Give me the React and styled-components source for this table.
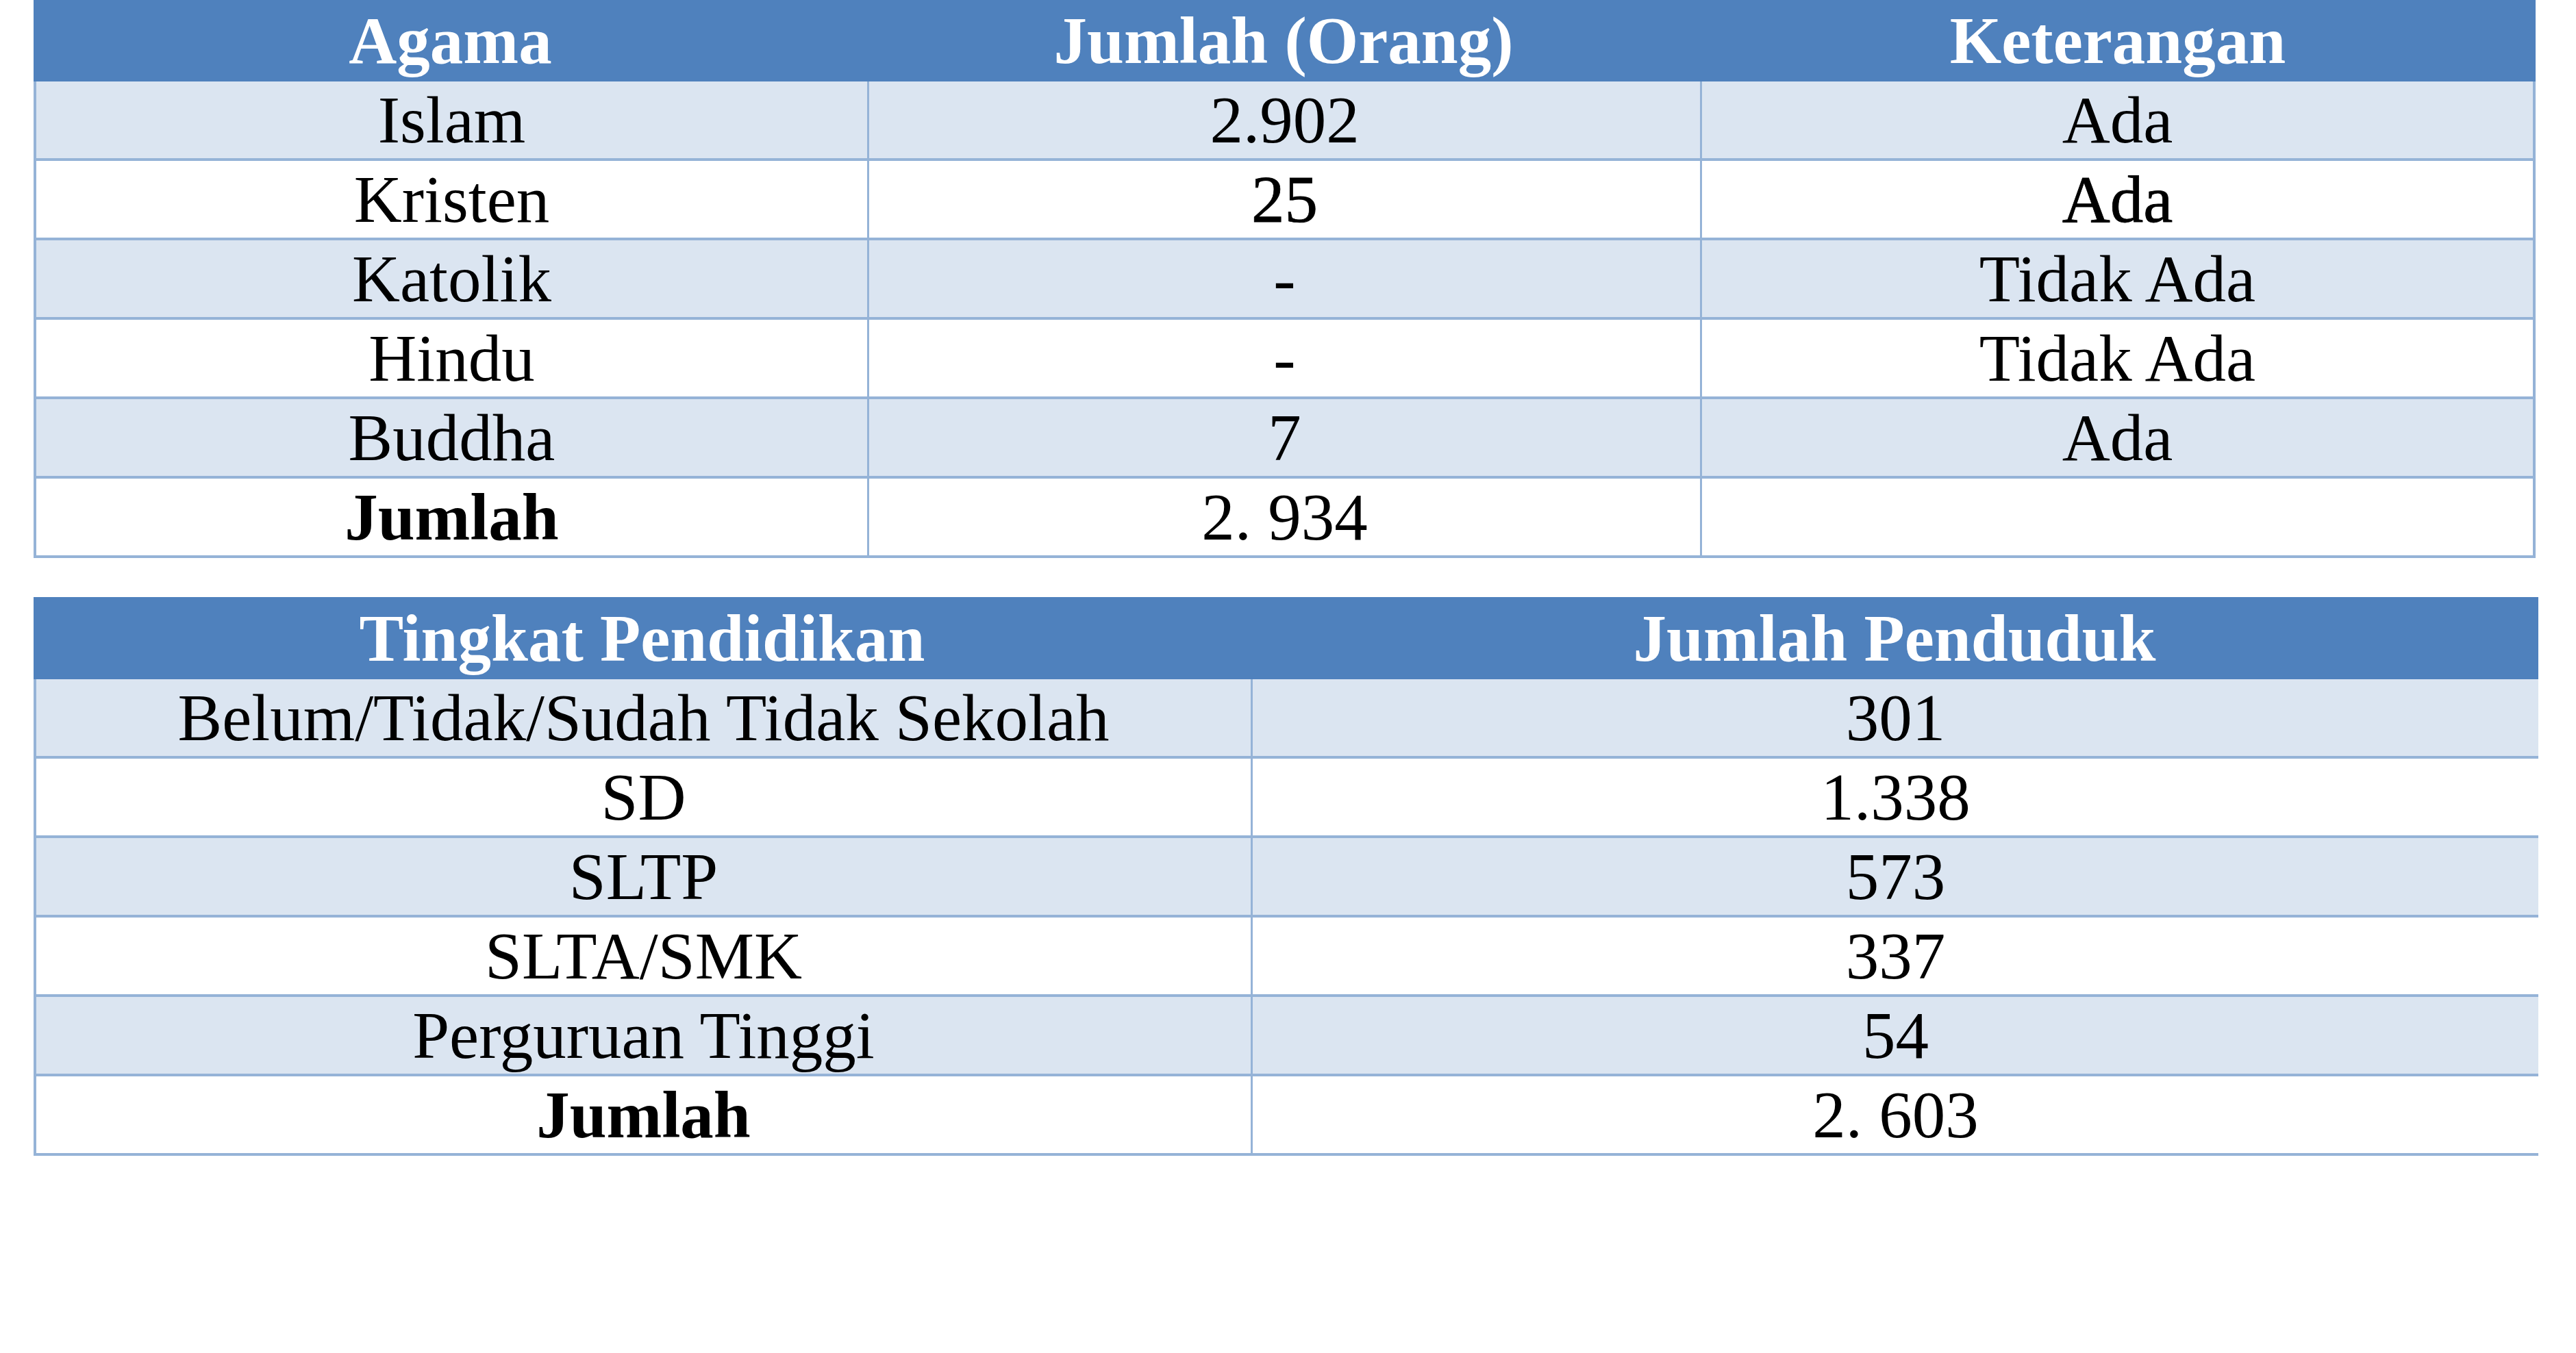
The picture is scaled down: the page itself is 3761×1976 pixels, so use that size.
import React from 'react';
import styled, { createGlobalStyle } from 'styled-components';

const Global = createGlobalStyle`
  html, body { margin: 0; padding: 0; background: #ffffff; }
  body { font-family: "Liberation Serif", "Times New Roman", serif; color: #000; }
`;

const BORDER = '#95B3D7';

const Page = styled.div`
  display: flex;
  flex-direction: column;
  gap: 57px;
  padding-left: 49px;
  box-sizing: border-box;
  width: 3761px;
`;

const Table = styled.div`
  width: ${(p) => p.$width}px;
  display: flex;
  flex-direction: column;
`;

const HeaderRow = styled.div`
  display: grid;
  grid-template-columns: ${(p) => p.$cols};
  height: ${(p) => p.$h}px;
  background: #4f81bd;
`;

const HeaderCell = styled.div`
  color: #ffffff;
  font-weight: 700;
  font-size: 97px;
  padding-top: 1px;
  line-height: ${(p) => p.$h - 1}px;
  text-align: center;
  white-space: nowrap;
`;

const Row = styled.div`
  display: grid;
  grid-template-columns: ${(p) => p.$cols};
  height: 116px;
  box-sizing: border-box;
  background: ${(p) => (p.$shade ? '#DBE5F1' : '#ffffff')};
  border-left: 4px solid ${BORDER};
  border-right: ${(p) => (p.$rightBorder ? `4px solid ${BORDER}` : 'none')};
  border-bottom: 4px solid ${BORDER};
`;

const Cell = styled.div`
  box-sizing: border-box;
  font-size: 97px;
  padding-top: 2px;
  line-height: 110px;
  text-align: center;
  white-space: nowrap;
  font-weight: ${(p) => (p.$bold ? 700 : 400)};
  -webkit-text-stroke: ${(p) => (p.$heavy ? '0.8px #000' : '0')};
  & + & {
    border-left: 3px solid ${BORDER};
  }
`;

const agama = [
  ['Islam', '2.902', 'Ada'],
  ['Kristen', '25', 'Ada', true],
  ['Katolik', '-', 'Tidak Ada'],
  ['Hindu', '-', 'Tidak Ada'],
  ['Buddha', '7', 'Ada'],
];

const pendidikan = [
  ['Belum/Tidak/Sudah Tidak Sekolah', '301'],
  ['SD', '1.338'],
  ['SLTP', '573'],
  ['SLTA/SMK', '337'],
  ['Perguruan Tinggi', '54'],
];

export default function App() {
  return (
    <>
      <Global />
      <Page>
        <Table $width={3653}>
          <HeaderRow $cols="1217px 1216px 1220px" $h={119}>
            <HeaderCell $h={119}>Agama</HeaderCell>
            <HeaderCell $h={119}>Jumlah (Orang)</HeaderCell>
            <HeaderCell $h={119}>Keterangan</HeaderCell>
          </HeaderRow>
          {agama.map(([a, b, c, heavy], i) => (
            <Row key={a} $cols="1213px 1216px 1216px" $shade={i % 2 === 0} $rightBorder>
              <Cell>{a}</Cell>
              <Cell $heavy={heavy}>{b}</Cell>
              <Cell $heavy={heavy}>{c}</Cell>
            </Row>
          ))}
          <Row $cols="1213px 1216px 1216px" $rightBorder>
            <Cell $bold>Jumlah</Cell>
            <Cell>2. 934</Cell>
            <Cell />
          </Row>
        </Table>

        <Table $width={3657}>
          <HeaderRow $cols="1777px 1880px" $h={120}>
            <HeaderCell $h={120}>Tingkat Pendidikan</HeaderCell>
            <HeaderCell $h={120}>Jumlah Penduduk</HeaderCell>
          </HeaderRow>
          {pendidikan.map(([a, b], i) => (
            <Row key={a} $cols="1773px 1880px" $shade={i % 2 === 0}>
              <Cell>{a}</Cell>
              <Cell>{b}</Cell>
            </Row>
          ))}
          <Row $cols="1773px 1880px">
            <Cell $bold>Jumlah</Cell>
            <Cell>2. 603</Cell>
          </Row>
        </Table>
      </Page>
    </>
  );
}
